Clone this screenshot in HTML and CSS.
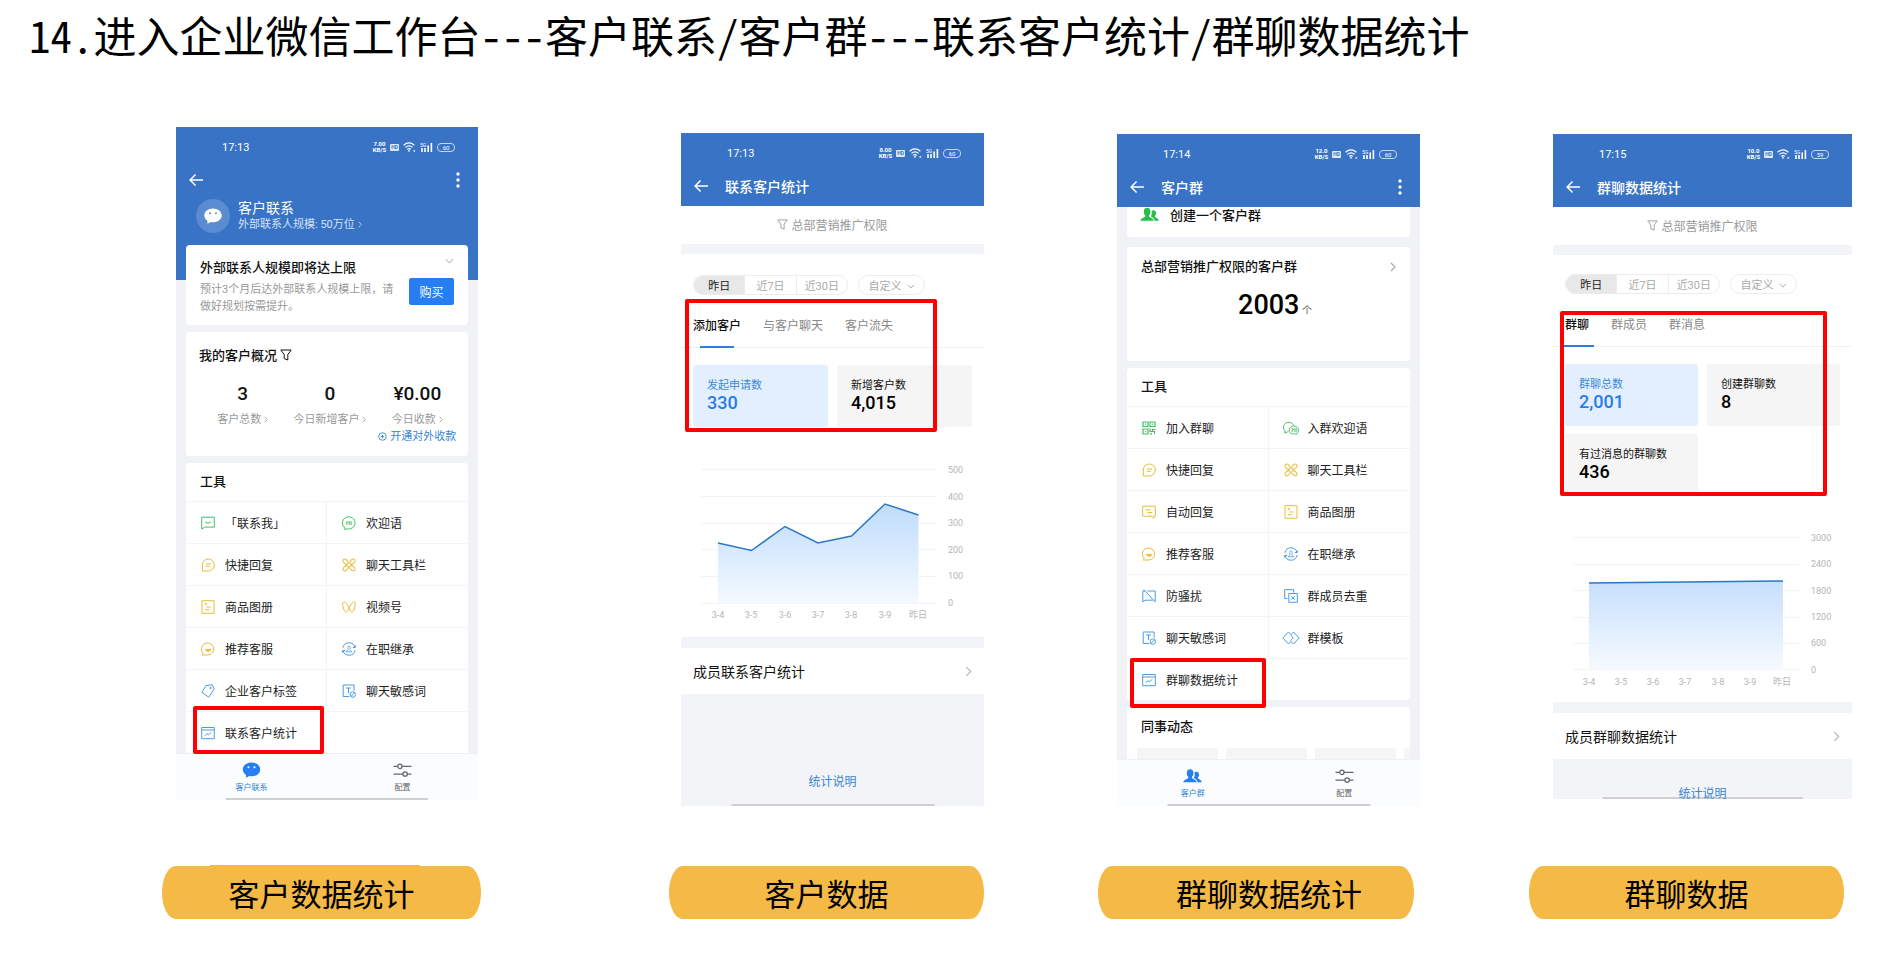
FILE: index.html
```html
<!DOCTYPE html>
<html lang="zh-CN">
<head>
    <meta charset="UTF-8">
    <meta name="viewport" content="width=device-width, initial-scale=1.0">
    <title>企业微信工作台 - 数据统计</title>
    <link rel="stylesheet" href="styles.css">
</head>
<body>

<!-- Icon sprite -->
<svg class="sprite" aria-hidden="true">
    <symbol id="i-back" viewBox="0 0 16 14"><path d="M15 7H1.5M7 1.2L1.2 7 7 12.8" fill="none" stroke="currentColor" stroke-width="1.6"/></symbol>
    <symbol id="i-more" viewBox="0 0 4 16"><circle cx="2" cy="2" r="1.7"/><circle cx="2" cy="8" r="1.7"/><circle cx="2" cy="14" r="1.7"/></symbol>
    <symbol id="i-right" viewBox="0 0 6 10"><path d="M1 1l4 4-4 4" fill="none" stroke="currentColor" stroke-width="1.2"/></symbol>
    <symbol id="i-down" viewBox="0 0 10 6"><path d="M1 1l4 4 4-4" fill="none" stroke="currentColor" stroke-width="1.2"/></symbol>
    <symbol id="i-filter" viewBox="0 0 12 12"><path d="M.8 1h10.4L7.8 5.5V11L4.2 9.6V5.5z" fill="none" stroke="currentColor" stroke-linejoin="round"/></symbol>
    <symbol id="i-wifi" viewBox="0 0 13 10"><g fill="none" stroke="currentColor" stroke-width="1.2"><path d="M.6 3.2Q6 -1.4 11.4 3.2M2.4 5.4Q6 2.3 9.6 5.4M4.2 7.4Q6 5.9 7.8 7.4"/></g><circle cx="6" cy="8.8" r=".9"/><path d="M10.5 8.2h1.6v1.4h-1.6z"/></symbol>
    <symbol id="i-signal" viewBox="0 0 13 10"><path d="M1.2 6h1.6v4H1.2zM4.2 6h1.6v4H4.2zM7.4 3.5H9V10H7.4zM10.6 1h1.6v9h-1.6z"/></symbol>
    <symbol id="i-wechat" viewBox="0 0 18 16"><path d="M9 .5c4.9 0 8.7 3 8.7 6.900s-3.800 6.800-8.700 6.800c-.8 0-1.500-.1-2.200-.2L3.400 15.700l.1-2.900C1.500 11.500.3 9.600.3 7.400.3 3.500 4.100.5 9 .5z"/><circle class="eye" cx="6" cy="5.300" r="1"/><circle class="eye" cx="12" cy="5.300" r="1"/></symbol>
    <symbol id="i-people" viewBox="0 0 20 15"><path d="M7.500.5c2.300 0 3.500 1.700 3.500 4 0 1.700-.7 3-1.500 3.900v1.100c0 .6 4.700 1.800 5 4.500H.3c.3-2.700 5.200-3.900 5.200-4.500V8.400C4.700 7.500 4 6.200 4 4.500c0-2.300 1.200-4 3.500-4z"/><path d="M14 3c1.900 0 2.900 1.300 2.900 3.100 0 1.300-.6 2.200-1.200 2.900v.8c0 .5 3.800 1.500 4 4.200h-4.300c-.4-2.500-2.600-3.500-3.700-4.100v-1c.5-.7.7-1.700.7-2.900 0-1.100-.2-1.900-.4-2.300.5-.5 1.200-.7 2-.7z"/></symbol>
    <symbol id="i-sliders" viewBox="0 0 18 14"><g fill="none" stroke="currentColor" stroke-width="1.200"><path d="M.5 3.500h3.800M8.700 3.500h8.800M.5 10.800h8.800M13.700 10.800h3.800"/><circle cx="6.500" cy="3.500" r="2.100"/><circle cx="11.500" cy="10.800" r="2.100"/></g></symbol>
    <symbol id="i-plus" viewBox="0 0 10 10"><circle cx="5" cy="5" r="4.200" fill="none" stroke="currentColor"/><path d="M5 3v4M3 5h4" stroke="currentColor"/></symbol>

    <symbol id="i-contact" viewBox="0 0 14 14"><path d="M.7 1.200h12.600v9.900H3.600L.7 13.100zM4.300 6.100q2.700 2.200 5.400 0" fill="none" stroke="currentColor"/></symbol>
    <symbol id="i-hi" viewBox="0 0 14 14"><path d="M3.300 12A6.300 6.100 0 1 1 5.600 12.900L2.500 13.400z" fill="none" stroke="currentColor"/></symbol>
    <symbol id="i-quick" viewBox="0 0 14 14"><path d="M1.300 13V7A6 6 0 1 1 7.300 13zM4.800 6h5.400M4.800 8.300h3.800" fill="none" stroke="currentColor"/></symbol>
    <symbol id="i-petal" viewBox="0 0 14 14"><g fill="none" stroke="currentColor"><ellipse cx="3.600" cy="3.700" rx="3" ry="2" transform="rotate(45 3.600 3.700)"/><ellipse cx="10.400" cy="3.700" rx="3" ry="2" transform="rotate(-45 10.400 3.700)"/><ellipse cx="3.600" cy="10.300" rx="3" ry="2" transform="rotate(-45 3.600 10.300)"/><ellipse cx="10.400" cy="10.300" rx="3" ry="2" transform="rotate(45 10.400 10.300)"/></g></symbol>
    <symbol id="i-goods" viewBox="0 0 14 14"><path d="M1 .7h12v12.600H1zM5.500 7h4M3.800 9.800h4.600" fill="none" stroke="currentColor"/><path d="M3.300 3.200h3.200L4.900 5.400z"/></symbol>
    <symbol id="i-video" viewBox="0 0 14 14"><path d="M7 7.500C5 3.600 3 1.400 1.600 1.900S.5 5.800 1.700 9s2.400 3.900 3.600 2.200C6.900 8.800 9 3 11.600 1.900c2-.7 2 3 .7 7.100-1 3.200-2.400 3.900-3.600 2.200z" fill="none" stroke="currentColor"/></symbol>
    <symbol id="i-service" viewBox="0 0 14 14"><path d="M2.300 11.400A6.200 6 0 1 1 7 13H.9z" fill="none" stroke="currentColor"/><path d="M4.400 7.300h5.600c-.2 1.300-1.300 2.100-2.800 2.100S4.600 8.600 4.400 7.300z" stroke="currentColor" stroke-width=".6"/></symbol>
    <symbol id="i-inherit" viewBox="0 0 14 14"><g fill="none" stroke="currentColor"><path d="M.9 5.800A6.200 6.200 0 0 1 13 5.500M13.100 8.200A6.200 6.200 0 0 1 1 8.500M10.900 5.500h2.400V3.200M3.100 8.500H.7v2.300"/><path d="M4 9.800c.2-1 2.200-1.300 2.200-2C5.600 7.300 5.500 3.800 7 3.800s1.400 3.500.8 4c0 .7 2 1 2.200 2z" stroke-width=".8"/></g></symbol>
    <symbol id="i-tag" viewBox="0 0 14 14"><path d="M4.800 1.800L11.200.7l2 4.300L7.700 13.200.9 8.400z" fill="none" stroke="currentColor" stroke-linejoin="round"/><circle cx="9.600" cy="3.900" r="1"/></symbol>
    <symbol id="i-word" viewBox="0 0 14 14"><g fill="none" stroke="currentColor"><path d="M7.200 12.500H1.200V1h10.900v5.700M4 4h5M6.500 4v5.200"/><circle cx="10.800" cy="10.600" r="2.700"/><path d="M9 12.400l3.700-3.700"/></g></symbol>
    <symbol id="i-stats" viewBox="0 0 14 14"><path d="M.7 1.500h12.600v11.200H.7zM.7 4h12.600M3.800 9.900l2.100-2.300 1.600 1.200 2.800-2.500" fill="none" stroke="currentColor"/></symbol>
    <symbol id="i-qr" viewBox="0 0 14 14"><path d="M1 1h5v4.500H1zM8 1h5v4.500H8zM1 8h5v5H1zM3 3.200h1M10 3.200h1M3 10.500h1M8 7.500v3h2.500v-2h3M8 12.900h2M11 10.500h1.500v2.400" fill="none" stroke="currentColor" stroke-width="1.200"/></symbol>
    <symbol id="i-grouphi" viewBox="0 0 19 14"><path d="M6.600 10.800l-3.700 1.600.4-2.400A5.600 5.200 0 1 1 12.300 4.200M9 12.400A5 4.400 0 1 1 15.600 12.700l.4.800-2.300-.3A5 4.400 0 0 1 9 12.400" fill="none" stroke="currentColor"/></symbol>
    <symbol id="i-auto" viewBox="0 0 14 14"><path d="M.7 1.200h12.600v10h-1.500v2l-2.600-2H.7zM3.600 4.900h5M5.300 7.600h5" fill="none" stroke="currentColor"/></symbol>
    <symbol id="i-mute" viewBox="0 0 14 14"><path d="M3 2H.8v10.900L3 11.200h7.800M5.500 2h7.700v10.300M1.800.5l11.600 12.700" fill="none" stroke="currentColor"/></symbol>
    <symbol id="i-dedupe" viewBox="0 0 14 14"><path d="M3.500 9.500H.7V.7h9v2.900M4.800 4.500h8.500v8.800H4.800zM7.300 7.200l3.400 3.400M10.700 7.200l-3.400 3.400" fill="none" stroke="currentColor"/></symbol>
    <symbol id="i-template" viewBox="0 0 18 14"><path d="M8.500 11L6.500 13 .8 7l5.700-6 2 2M11.500 1l5.700 6-5.700 6-3-3.100L11.300 7 8.600 4z" fill="none" stroke="currentColor"/></symbol>
</svg>

<h1 class="page-title">14.进入企业微信工作台---客户联系/客户群---联系客户统计/群聊数据统计</h1>

<main class="steps">

    <!-- 客户联系 -->
    <section class="step step-1">
        <div class="phone">
            <header class="top top-tall">
                <div class="status">
                    <span>17:13</span>
                    <div class="status-right">
                        <span class="speed">7.00<br>KB/S</span><span class="hd">HD</span>
                        <svg class="sig"><use href="#i-wifi"/></svg><svg class="sig" viewBox="0 0 13 10"><use href="#i-signal"/><text x="0" y="5">5G</text></svg>
                        <span class="battery">60</span>
                    </div>
                </div>
                <div class="bar">
                    <button class="back" aria-label="返回"><svg><use href="#i-back"/></svg></button>
                    <button class="more" aria-label="更多"><svg><use href="#i-more"/></svg></button>
                </div>
                <div class="profile">
                    <span class="avatar"><svg><use href="#i-wechat"/></svg></span>
                    <div>
                        <p class="profile-name">客户联系</p>
                        <a class="profile-sub" href="#">外部联系人规模: 50万位<svg class="chev"><use href="#i-right"/></svg></a>
                    </div>
                </div>
            </header>
            <div class="cards cards-raised">
                <div class="card notice">
                    <div>
                        <h2>外部联系人规模即将达上限</h2>
                        <p>预计3个月后达外部联系人规模上限，请做好规划按需提升。</p>
                    </div>
                    <div class="notice-side">
                        <svg class="chev-down"><use href="#i-down"/></svg>
                        <button class="buy">购买</button>
                    </div>
                </div>
                <div class="card overview">
                    <h2>我的客户概况 <svg class="filter-icon"><use href="#i-filter"/></svg></h2>
                    <div class="numbers">
                        <div><b>3</b><a href="#">客户总数<svg class="chev"><use href="#i-right"/></svg></a></div>
                        <div><b>0</b><a href="#">今日新增客户<svg class="chev"><use href="#i-right"/></svg></a></div>
                        <div><b>¥0.00</b><a href="#">今日收款<svg class="chev"><use href="#i-right"/></svg></a><a class="open-pay" href="#"><svg class="plus"><use href="#i-plus"/></svg>开通对外收款</a></div>
                    </div>
                </div>
                <div class="card card-open">
                    <h2 class="tools-title">工具</h2>
                    <div class="tools">
                        <a class="green" href="#"><svg><use href="#i-contact"/></svg>「联系我」</a>
                        <a class="green" href="#"><svg viewBox="0 0 14 14"><use href="#i-hi"/><text x="7" y="9">Hi</text></svg>欢迎语</a>
                        <a class="yellow" href="#"><svg><use href="#i-quick"/></svg>快捷回复</a>
                        <a class="yellow" href="#"><svg><use href="#i-petal"/></svg>聊天工具栏</a>
                        <a class="yellow" href="#"><svg><use href="#i-goods"/></svg>商品图册</a>
                        <a class="yellow" href="#"><svg><use href="#i-video"/></svg>视频号</a>
                        <a class="yellow" href="#"><svg><use href="#i-service"/></svg>推荐客服</a>
                        <a class="blue" href="#"><svg><use href="#i-inherit"/></svg>在职继承</a>
                        <a class="blue" href="#"><svg><use href="#i-tag"/></svg>企业客户标签</a>
                        <a class="blue" href="#"><svg><use href="#i-word"/></svg>聊天敏感词</a>
                        <a class="blue" href="#"><svg><use href="#i-stats"/></svg>联系客户统计<span class="mark mark-tool"></span></a>
                        <span class="empty"></span>
                    </div>
                </div>
            </div>
            <nav class="tabbar">
                <a class="active" href="#"><svg><use href="#i-wechat"/></svg>客户联系</a>
                <a href="#"><svg><use href="#i-sliders"/></svg>配置</a>
            </nav>
            <span class="home"></span>
        </div>
        <p class="caption caption-bump">客户数据统计</p>
    </section>

    <!-- 联系客户统计 -->
    <section class="step step-2">
        <div class="phone">
            <header class="top">
                <div class="status">
                    <span>17:13</span>
                    <div class="status-right">
                        <span class="speed">8.00<br>KB/S</span><span class="hd">HD</span>
                        <svg class="sig"><use href="#i-wifi"/></svg><svg class="sig" viewBox="0 0 13 10"><use href="#i-signal"/><text x="0" y="5">5G</text></svg>
                        <span class="battery">60</span>
                    </div>
                </div>
                <div class="bar">
                    <button class="back" aria-label="返回"><svg><use href="#i-back"/></svg></button>
                    <h2>联系客户统计</h2>
                </div>
            </header>
            <button class="scope"><svg><use href="#i-filter"/></svg>总部营销推广权限</button>
            <div class="report">
                <div class="ranges">
                    <div class="segments">
                        <button class="active">昨日</button><button>近7日</button><button>近30日</button>
                    </div>
                    <button class="custom">自定义<svg><use href="#i-down"/></svg></button>
                </div>
                <div class="tabs">
                    <button class="active">添加客户</button><button>与客户聊天</button><button>客户流失</button>
                </div>
                <div class="metrics">
                    <div class="metric active">发起申请数<b>330</b></div>
                    <div class="metric">新增客户数<b>4,015</b></div>
                </div>
                <svg class="chart" viewBox="0 0 303 210">
                    <defs>
                        <linearGradient id="fill-a" x1="0" y1="0" x2="0" y2="1"><stop offset="0" stop-color="#bfdcfc"/><stop offset="1" stop-color="#f4faff"/></linearGradient>
                    </defs>
                    <path class="grid" d="M20 42.500h236M20 69.500h236M20 96.500h236M20 122.500h236M20 149.500h236M20 176.500h236"/>
                    <path fill="url(#fill-a)" d="M37 116L70.500 123.500 104 99.500 137 116 170.500 109 204 77 237.500 88V176.500H37z"/>
                    <path class="line" d="M37 116L70.500 123.500 104 99.500 137 116 170.500 109 204 77 237.500 88"/>
                    <g><text x="267" y="46">500</text><text x="267" y="73">400</text><text x="267" y="99">300</text><text x="267" y="126">200</text><text x="267" y="152">100</text><text x="267" y="179">0</text></g>
                    <g class="days"><text x="37" y="191">3-4</text><text x="70" y="191">3-5</text><text x="104" y="191">3-6</text><text x="137" y="191">3-7</text><text x="170" y="191">3-8</text><text x="204" y="191">3-9</text><text x="237" y="191">昨日</text></g>
                </svg>
                <span class="mark mark-contact"></span>
            </div>
            <a class="member" href="#">成员联系客户统计<svg><use href="#i-right"/></svg></a>
            <div class="explain"><a href="#">统计说明</a></div>
            <span class="home"></span>
        </div>
        <p class="caption">客户数据</p>
    </section>

    <!-- 客户群 -->
    <section class="step step-3">
        <div class="phone">
            <header class="top">
                <div class="status">
                    <span>17:14</span>
                    <div class="status-right">
                        <span class="speed">12.0<br>KB/S</span><span class="hd">HD</span>
                        <svg class="sig"><use href="#i-wifi"/></svg><svg class="sig" viewBox="0 0 13 10"><use href="#i-signal"/><text x="0" y="5">5G</text></svg>
                        <span class="battery">60</span>
                    </div>
                </div>
                <div class="bar">
                    <button class="back" aria-label="返回"><svg><use href="#i-back"/></svg></button>
                    <h2>客户群</h2>
                    <button class="more" aria-label="更多"><svg><use href="#i-more"/></svg></button>
                </div>
            </header>
            <div class="cards">
                <a class="card create" href="#"><svg><use href="#i-people"/></svg>创建一个客户群</a>
                <div class="card total">
                    <h2>总部营销推广权限的客户群<svg><use href="#i-right"/></svg></h2>
                    <p><b>2003</b> 个</p>
                </div>
                <div class="card">
                    <h2 class="tools-title">工具</h2>
                    <div class="tools">
                        <a class="green" href="#"><svg><use href="#i-qr"/></svg>加入群聊</a>
                        <a class="green" href="#"><svg class="wide" viewBox="0 0 19 14"><use href="#i-grouphi"/><text x="13" y="11">Hi</text></svg>入群欢迎语</a>
                        <a class="yellow" href="#"><svg><use href="#i-quick"/></svg>快捷回复</a>
                        <a class="yellow" href="#"><svg><use href="#i-petal"/></svg>聊天工具栏</a>
                        <a class="yellow" href="#"><svg><use href="#i-auto"/></svg>自动回复</a>
                        <a class="yellow" href="#"><svg><use href="#i-goods"/></svg>商品图册</a>
                        <a class="yellow" href="#"><svg><use href="#i-service"/></svg>推荐客服</a>
                        <a class="blue" href="#"><svg><use href="#i-inherit"/></svg>在职继承</a>
                        <a class="blue" href="#"><svg><use href="#i-mute"/></svg>防骚扰</a>
                        <a class="blue" href="#"><svg><use href="#i-dedupe"/></svg>群成员去重</a>
                        <a class="blue" href="#"><svg><use href="#i-word"/></svg>聊天敏感词</a>
                        <a class="blue" href="#"><svg class="wide"><use href="#i-template"/></svg>群模板</a>
                        <a class="blue" href="#"><svg><use href="#i-stats"/></svg>群聊数据统计<span class="mark mark-tool mark-group"></span></a>
                        <span class="empty"></span>
                    </div>
                </div>
                <div class="card card-open news">
                    <h2>同事动态</h2>
                    <div class="thumbs"><span></span><span></span><span></span><span></span></div>
                </div>
            </div>
            <nav class="tabbar">
                <a class="active" href="#"><svg><use href="#i-people"/></svg>客户群</a>
                <a href="#"><svg><use href="#i-sliders"/></svg>配置</a>
            </nav>
            <span class="home"></span>
        </div>
        <p class="caption caption-indent">群聊数据统计</p>
    </section>

    <!-- 群聊数据统计 -->
    <section class="step step-4">
        <div class="phone">
            <header class="top">
                <div class="status">
                    <span>17:15</span>
                    <div class="status-right">
                        <span class="speed">10.0<br>KB/S</span><span class="hd">HD</span>
                        <svg class="sig"><use href="#i-wifi"/></svg><svg class="sig" viewBox="0 0 13 10"><use href="#i-signal"/><text x="0" y="5">5G</text></svg>
                        <span class="battery">59</span>
                    </div>
                </div>
                <div class="bar">
                    <button class="back" aria-label="返回"><svg><use href="#i-back"/></svg></button>
                    <h2>群聊数据统计</h2>
                </div>
            </header>
            <button class="scope"><svg><use href="#i-filter"/></svg>总部营销推广权限</button>
            <div class="report report-group">
                <div class="ranges">
                    <div class="segments">
                        <button class="active">昨日</button><button>近7日</button><button>近30日</button>
                    </div>
                    <button class="custom">自定义<svg><use href="#i-down"/></svg></button>
                </div>
                <div class="tabs">
                    <button class="active">群聊</button><button>群成员</button><button>群消息</button>
                </div>
                <div class="metrics">
                    <div class="metric active">群聊总数<b>2,001</b></div>
                    <div class="metric">创建群聊数<b>8</b></div>
                    <div class="metric">有过消息的群聊数<b>436</b></div>
                </div>
                <svg class="chart" viewBox="0 0 299 206">
                    <defs>
                        <linearGradient id="fill-b" x1="0" y1="0" x2="0" y2="1"><stop offset="0" stop-color="#c6dffc"/><stop offset="1" stop-color="#f6faff"/></linearGradient>
                    </defs>
                    <path class="grid" d="M20 41.500h226M20 68.500h226M20 94.500h226M20 121.500h226M20 147.500h226M20 173.500h226"/>
                    <path fill="url(#fill-b)" d="M36 87L230 85V173.500H36z"/>
                    <path class="line" d="M36 87L230 85"/>
                    <g><text x="258" y="45">3000</text><text x="258" y="71">2400</text><text x="258" y="98">1800</text><text x="258" y="124">1200</text><text x="258" y="150">600</text><text x="258" y="177">0</text></g>
                    <g class="days"><text x="36" y="189">3-4</text><text x="68" y="189">3-5</text><text x="100" y="189">3-6</text><text x="132" y="189">3-7</text><text x="165" y="189">3-8</text><text x="197" y="189">3-9</text><text x="229" y="189">昨日</text></g>
                </svg>
                <span class="mark mark-group-data"></span>
            </div>
            <a class="member" href="#">成员群聊数据统计<svg><use href="#i-right"/></svg></a>
            <div class="explain explain-cut"><a href="#">统计说明</a></div>
            <span class="home"></span>
        </div>
        <p class="caption">群聊数据</p>
    </section>

</main>
</body>
</html>
```
FILE: styles.css
```css
* { box-sizing: border-box; }
body {
    margin: 0;
    background: #fff;
    color: #111;
    font-family: Roboto, 'Noto Sans CJK SC', sans-serif;
    font-size: 12px;
}
h1, h2, p { margin: 0; font-weight: 400; }
a { color: inherit; text-decoration: none; }
button {
    border: 0;
    padding: 0;
    background: none;
    color: inherit;
    font: inherit;
    cursor: pointer;
}
svg { fill: currentColor; flex: none; }
.sprite { position: absolute; width: 0; height: 0; }

.page-title {
    padding: 2px 29px 0;
    font-family: 'Noto Sans CJK SC', sans-serif;
    font-feature-settings: "hwid";
    font-size: 43px;
    line-height: 64px;
    color: #000;
}

/* Steps */
.steps {
    display: grid;
    grid-template-columns: 481fr 503fr 436fr 432fr;
    padding: 61px 43px 40px 0;
}
.step { display: flex; flex-direction: column; min-width: 0; padding-top: 7px; }
.step-1 { padding-top: 0; padding-left: 162px; }
.step-2 { padding-top: 6px; padding-left: 188px; }
.step-3 { padding-left: 114px; }
.step-4 { padding-left: 109px; }
.step-1 .phone { margin: 0 3px 0 14px; }
.step-2 .phone { margin-left: 12px; }
.step-3 .phone { margin-left: 19px; }
.step-4 .phone { margin-left: 24px; }
.step-3 .caption { margin-right: 6px; }
.step-4 .caption { margin-right: 8px; }

.caption {
    position: relative;
    margin-top: auto;
    border-radius: 14px / 27px;
    background: #f5b946;
    color: #000;
    font-family: 'Noto Sans CJK SC', sans-serif;
    font-size: 31px;
    line-height: 53px;
    text-align: center;
}
.caption-indent { padding-left: 26px; }
.caption-bump::before {
    content: "";
    position: absolute;
    top: -1px;
    left: 15%;
    width: 66%;
    height: 2px;
    background: #f5b946;
}

/* Phone */
.phone {
    position: relative;
    overflow: hidden;
    margin-bottom: 60px;
    background: #fff;
}
.home {
    position: absolute;
    bottom: 0;
    left: 50%;
    width: 67%;
    height: 2px;
    transform: translateX(-50%);
    background: #cfcfd1;
}
.top {
    padding-top: 7px;
    background: #3973c5;
    color: #fff;
}
.top-tall { padding-bottom: 48px; }
.status {
    display: flex;
    justify-content: space-between;
    align-items: center;
    height: 26px;
    padding: 0 23px 0 46px;
    font-size: 11px;
}
.status-right { display: flex; align-items: center; gap: 4px; }
.speed { font-size: 6px; line-height: 6px; font-weight: 700; text-align: center; }
.hd {
    border-radius: 1px;
    padding: 0 1px;
    background: #dfe9f7;
    color: #3973c5;
    font-size: 5px;
    line-height: 7px;
    font-weight: 700;
}
.sig { width: 13px; height: 10px; }
.sig text { font-size: 5px; }
.battery {
    width: 18px;
    border: 1px solid #c5d6ee;
    border-radius: 4px;
    font-size: 6px;
    line-height: 7px;
    text-align: center;
}
.bar {
    display: flex;
    align-items: center;
    height: 40px;
    padding: 0 18px 0 13px;
}
.back svg { display: block; width: 15px; height: 14px; }
.more { margin-left: auto; }
.more svg { display: block; width: 4px; height: 16px; }
.bar h2 { margin-left: 16px; font-size: 14px; font-weight: 500; }
.profile {
    display: flex;
    align-items: center;
    gap: 8px;
    height: 32px;
    padding-left: 20px;
}
.avatar {
    display: flex;
    align-items: center;
    justify-content: center;
    width: 34px;
    height: 34px;
    border-radius: 50%;
    background: #5b8bd0;
}
.avatar svg { --eye: #5b8bd0; width: 18px; height: 16px; }
.eye { fill: var(--eye, #fff); }
.profile-name { font-size: 14px; line-height: 18px; }
.profile-sub { display: block; color: #d5e2f5; font-size: 11px; line-height: 16px; }
.chev { width: 4px; height: 7px; margin-left: 3px; }

/* Cards */
.cards {
    padding: 0 10px;
    background: #f1f2f5;
}
.cards-raised {
    margin-top: -35px;
    background: linear-gradient(#3973c5 35px, #f1f2f5 35px);
}
.card {
    display: block;
    margin-bottom: 7px;
    border-radius: 4px;
    background: #fff;
}
.card-open { margin-bottom: 0; border-radius: 4px 4px 0 0; }
.card h2 { font-size: 13px; line-height: 20px; font-weight: 500; }
.notice {
    display: flex;
    justify-content: space-between;
    height: 80px;
    padding: 13px 14px 0;
}
.notice p { width: 198px; margin-top: 3px; color: #999; font-size: 11px; line-height: 17px; }
.notice-side { display: flex; flex-direction: column; align-items: flex-end; flex: none; margin-left: -6px; }
.chev-down { width: 9px; height: 6px; color: #bbb; }
.buy {
    width: 45px;
    height: 27px;
    margin-top: 14px;
    border-radius: 2px;
    background: #267ef0;
    color: #fff;
}
.overview { height: 124px; padding: 14px 7px 0 13px; }
.filter-icon { width: 12px; height: 12px; vertical-align: -1px; }
.numbers {
    display: grid;
    grid-template-columns: repeat(3, 1fr);
    margin-top: 16px;
    color: #999;
    font-size: 11px;
    line-height: 17px;
    text-align: center;
    white-space: nowrap;
}
.numbers b {
    display: block;
    margin-bottom: 5px;
    color: #111;
    font-size: 19px;
    line-height: 24px;
    font-weight: 500;
}
.numbers a { display: block; }
.numbers .open-pay { color: #3b86cf; }
.plus { width: 9px; height: 9px; margin-right: 3px; vertical-align: -1px; }

.tools-title { padding: 9px 14px; }
.tools {
    display: grid;
    grid-template-columns: 1fr 1fr;
}
.tools > * {
    position: relative;
    display: flex;
    align-items: center;
    height: 42px;
    padding-left: 15px;
    border-top: 1px solid #f3f4f6;
    color: #222;
}
.tools > :nth-child(odd) { border-right: 1px solid #f3f4f6; }
.tools svg { width: 14px; height: 14px; margin-right: 10px; }
.tools svg.wide { width: 18px; margin: 0 8px 0 -2px; }
.tools text { font-size: 6px; font-weight: 700; text-anchor: middle; }
.green svg { color: #3fc063; }
.yellow svg { color: #eabb38; }
.blue svg { color: #4b9be0; }

.create {
    display: flex;
    align-items: flex-start;
    height: 30px;
    margin-bottom: 10px;
    padding-left: 13px;
    border-radius: 0 0 4px 4px;
    font-size: 13px;
    line-height: 18px;
    font-weight: 500;
}
.create svg { width: 19px; height: 15px; margin-right: 11px; color: #29bd4b; }
.total { height: 114px; padding: 10px 14px 0; }
.total h2 { display: flex; justify-content: space-between; align-items: center; }
.total h2 svg { width: 6px; height: 10px; color: #aaa; }
.total p { padding-left: 13px; color: #555; font-size: 10px; line-height: 56px; text-align: center; }
.total b { color: #000; font-size: 27px; font-weight: 500; }
.news { height: 52px; overflow: hidden; }
.news h2 { padding: 10px 14px 11px; }
.thumbs {
    display: grid;
    grid-template-columns: repeat(4, 81px);
    gap: 8px;
    height: 20px;
    margin-left: 10px;
}
.thumbs span { border-radius: 2px; background: #f5f5f6; }

.tabbar {
    display: grid;
    grid-template-columns: 1fr 1fr;
    height: 47px;
    border-top: 1px solid #eef0f3;
    background: #fafcfe;
}
.tabbar a {
    display: flex;
    flex-direction: column;
    align-items: center;
    padding-top: 8px;
    color: #666;
    font-size: 8px;
    line-height: 20px;
}
.tabbar svg { width: 19px; height: 16px; }
.tabbar .active { color: #2f84d3; }
.tabbar .active svg { color: #267ef0; }

/* Report */
.scope {
    display: flex;
    align-items: center;
    justify-content: center;
    gap: 3px;
    width: 100%;
    height: 38px;
    padding-bottom: 2px;
    color: #999;
}
.scope svg { width: 11px; height: 11px; }
.report {
    position: relative;
    padding-top: 21px;
    border-top: 10px solid #f3f4f7;
    border-bottom: 11px solid #f3f4f7;
}
.report-group { padding-top: 19px; }
.ranges { display: flex; gap: 10px; padding: 0 12px; }
.segments, .custom {
    overflow: hidden;
    height: 20px;
    border: 1px solid #ececec;
    border-radius: 10px;
    color: #aaa;
    font-size: 11px;
}
.segments { display: flex; width: 155px; }
.segments button { flex: 1; }
.segments button + button { border-left: 1px solid #ececec; }
.segments .active { background: #e8e8e8; color: #222; }
.custom { width: 67px; }
.custom svg { width: 8px; height: 5px; margin-left: 5px; vertical-align: 1px; }
.tabs {
    display: flex;
    gap: 22px;
    height: 45px;
    margin-top: 8px;
    padding: 0 12px;
    border-bottom: 1px solid #f0f0f0;
    color: #888;
}
.tabs button { position: relative; padding-bottom: 2px; }
.tabs .active { color: #111; font-weight: 500; }
.tabs .active::after {
    content: "";
    position: absolute;
    bottom: -1px;
    left: 50%;
    width: 34px;
    height: 2px;
    transform: translateX(-50%);
    background: #2f7fd6;
}
.metrics {
    display: grid;
    grid-template-columns: 1fr 1fr;
    gap: 8px 9px;
    padding: 17px 12px 0;
}
.metric {
    height: 62px;
    padding: 13px 14px 0;
    border-radius: 3px;
    background: #f5f5f5;
    font-size: 11px;
    line-height: 16px;
}
.metric b { display: block; font-size: 18px; line-height: 18px; font-weight: 500; color: #000; }
.metric.active { background: #e3effe; color: #3b8ad6; }
.metric.active b { color: #267ce8; }
.chart { display: block; width: 100%; }
.chart text { fill: #b5b5b5; font-size: 9px; }
.chart .days { text-anchor: middle; }
.chart .grid { stroke: #f2f3f4; }
.chart .line { fill: none; stroke: #2d76c4; stroke-width: 1.500; }
.member {
    display: flex;
    align-items: center;
    justify-content: space-between;
    height: 46px;
    padding: 0 12px;
    font-size: 14px;
}
.member svg { width: 7px; height: 11px; color: #bbb; }
.explain {
    height: 112px;
    padding-top: 78px;
    background: #f3f4f7;
    color: #3b86cf;
    line-height: 20px;
    text-align: center;
}
.explain a { position: relative; z-index: 1; }
.explain-cut { height: 40px; padding-top: 25px; }

/* Red highlight frames */
.mark {
    position: absolute;
    border: 4px solid #fe0000;
    border-radius: 2px;
}
.mark-tool { top: -6px; left: 7px; width: 131px; height: 48px; z-index: 1; }
.mark-group { top: -1px; left: 3px; width: 136px; height: 50px; }
.mark-contact { top: 45px; left: 4px; width: 252px; height: 133px; }
.mark-group-data { top: 56px; left: 7px; width: 267px; height: 185px; }
```
